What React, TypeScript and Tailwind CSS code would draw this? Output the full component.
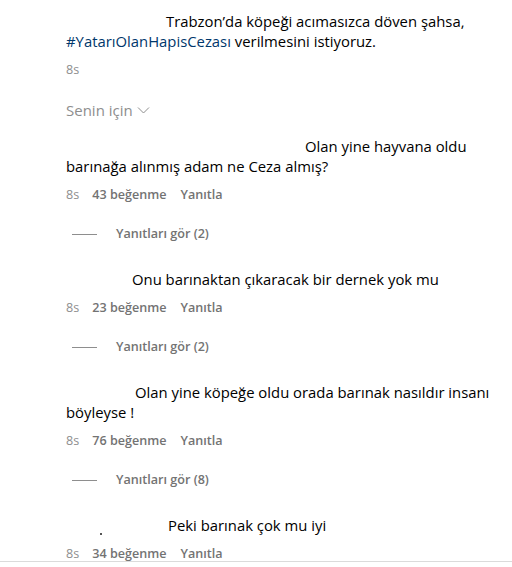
import React from "react";

const FONT = { fontFamily: '"Open Sans", "Noto Sans", "Liberation Sans", sans-serif' };

function Meta({ likes }: { likes: string }) {
  return (
    <div className="flex items-center text-[12.6px] leading-[16px] mt-[11px]">
      <span className="text-[#8e8e8e]">8s</span>
      <span className="ml-[13px] font-semibold text-[#737373]">{likes} beğenme</span>
      <span className="ml-[14px] font-semibold text-[#737373]">Yanıtla</span>
    </div>
  );
}

function Replies({ n }: { n: number }) {
  return (
    <div className="flex items-center mt-[23px] text-[12.6px] leading-[16px]">
      <span className="ml-[6px] w-[25px] h-px bg-[#8e8e8e]" />
      <span className="ml-[19px] font-semibold text-[#737373]">Yanıtları gör ({n})</span>
    </div>
  );
}

export default function App() {
  return (
    <div className="w-[512px] h-[567px] bg-white overflow-hidden" style={FONT}>
      <div className="pl-[66px] pt-[11px]">
        <p className="text-[14.85px] leading-[20px] text-[#000] whitespace-nowrap">
          <span className="inline-block w-[100px]" />
          Trabzon’da köpeği acımasızca döven şahsa,
          <br />
          <span className="text-[#00376b]">#YatarıOlanHapisCezası</span> verilmesini istiyoruz.
        </p>
        <div className="mt-[11px] text-[12.6px] leading-[16px] text-[#8e8e8e]">8s</div>

        <div className="mt-[22px] flex items-center text-[15px] leading-[20px] text-[#8e8e8e]">
          <span>Senin için</span>
          <svg className="ml-[4px]" width="13" height="8" viewBox="0 0 13 8" fill="none">
            <path d="M1 1.5 L6.5 7 L12 1.5" stroke="#8e8e8e" strokeWidth="1" />
          </svg>
        </div>

        {/* Comment 1 */}
        <p className="mt-[16px] text-[14.85px] leading-[20px] text-[#000] whitespace-nowrap">
          <span className="inline-block w-[239px]" />
          Olan yine hayvana oldu
          <br />
          barınağa alınmış adam ne Ceza almış?
        </p>
        <Meta likes="43" />
        <Replies n={2} />

        {/* Comment 2 */}
        <p className="mt-[27px] text-[14.85px] leading-[20px] text-[#000] whitespace-nowrap">
          <span className="inline-block w-[66px]" />
          Onu barınaktan çıkaracak bir dernek yok mu
        </p>
        <Meta likes="23" />
        <Replies n={2} />

        {/* Comment 3 */}
        <p className="mt-[27px] text-[14.85px] leading-[20px] text-[#000] whitespace-nowrap">
          <span className="inline-block w-[69px]" />
          Olan yine köpeğe oldu orada barınak nasıldır insanı
          <br />
          böyleyse !
        </p>
        <Meta likes="76" />
        <Replies n={8} />

        {/* Comment 4 */}
        <p className="mt-[27px] text-[14.85px] leading-[20px] text-[#000] whitespace-nowrap">
          <span className="inline-block w-[34px]" />
          <span className="inline-block w-[2px] h-[2px] bg-[#555] align-[-4px]" />
          <span className="inline-block w-[66px]" />
          Peki barınak çok mu iyi
        </p>
        <Meta likes="34" />
      </div>
      <div className="-mt-[1px] border-t border-[#dbdbdb]" />
    </div>
  );
}
